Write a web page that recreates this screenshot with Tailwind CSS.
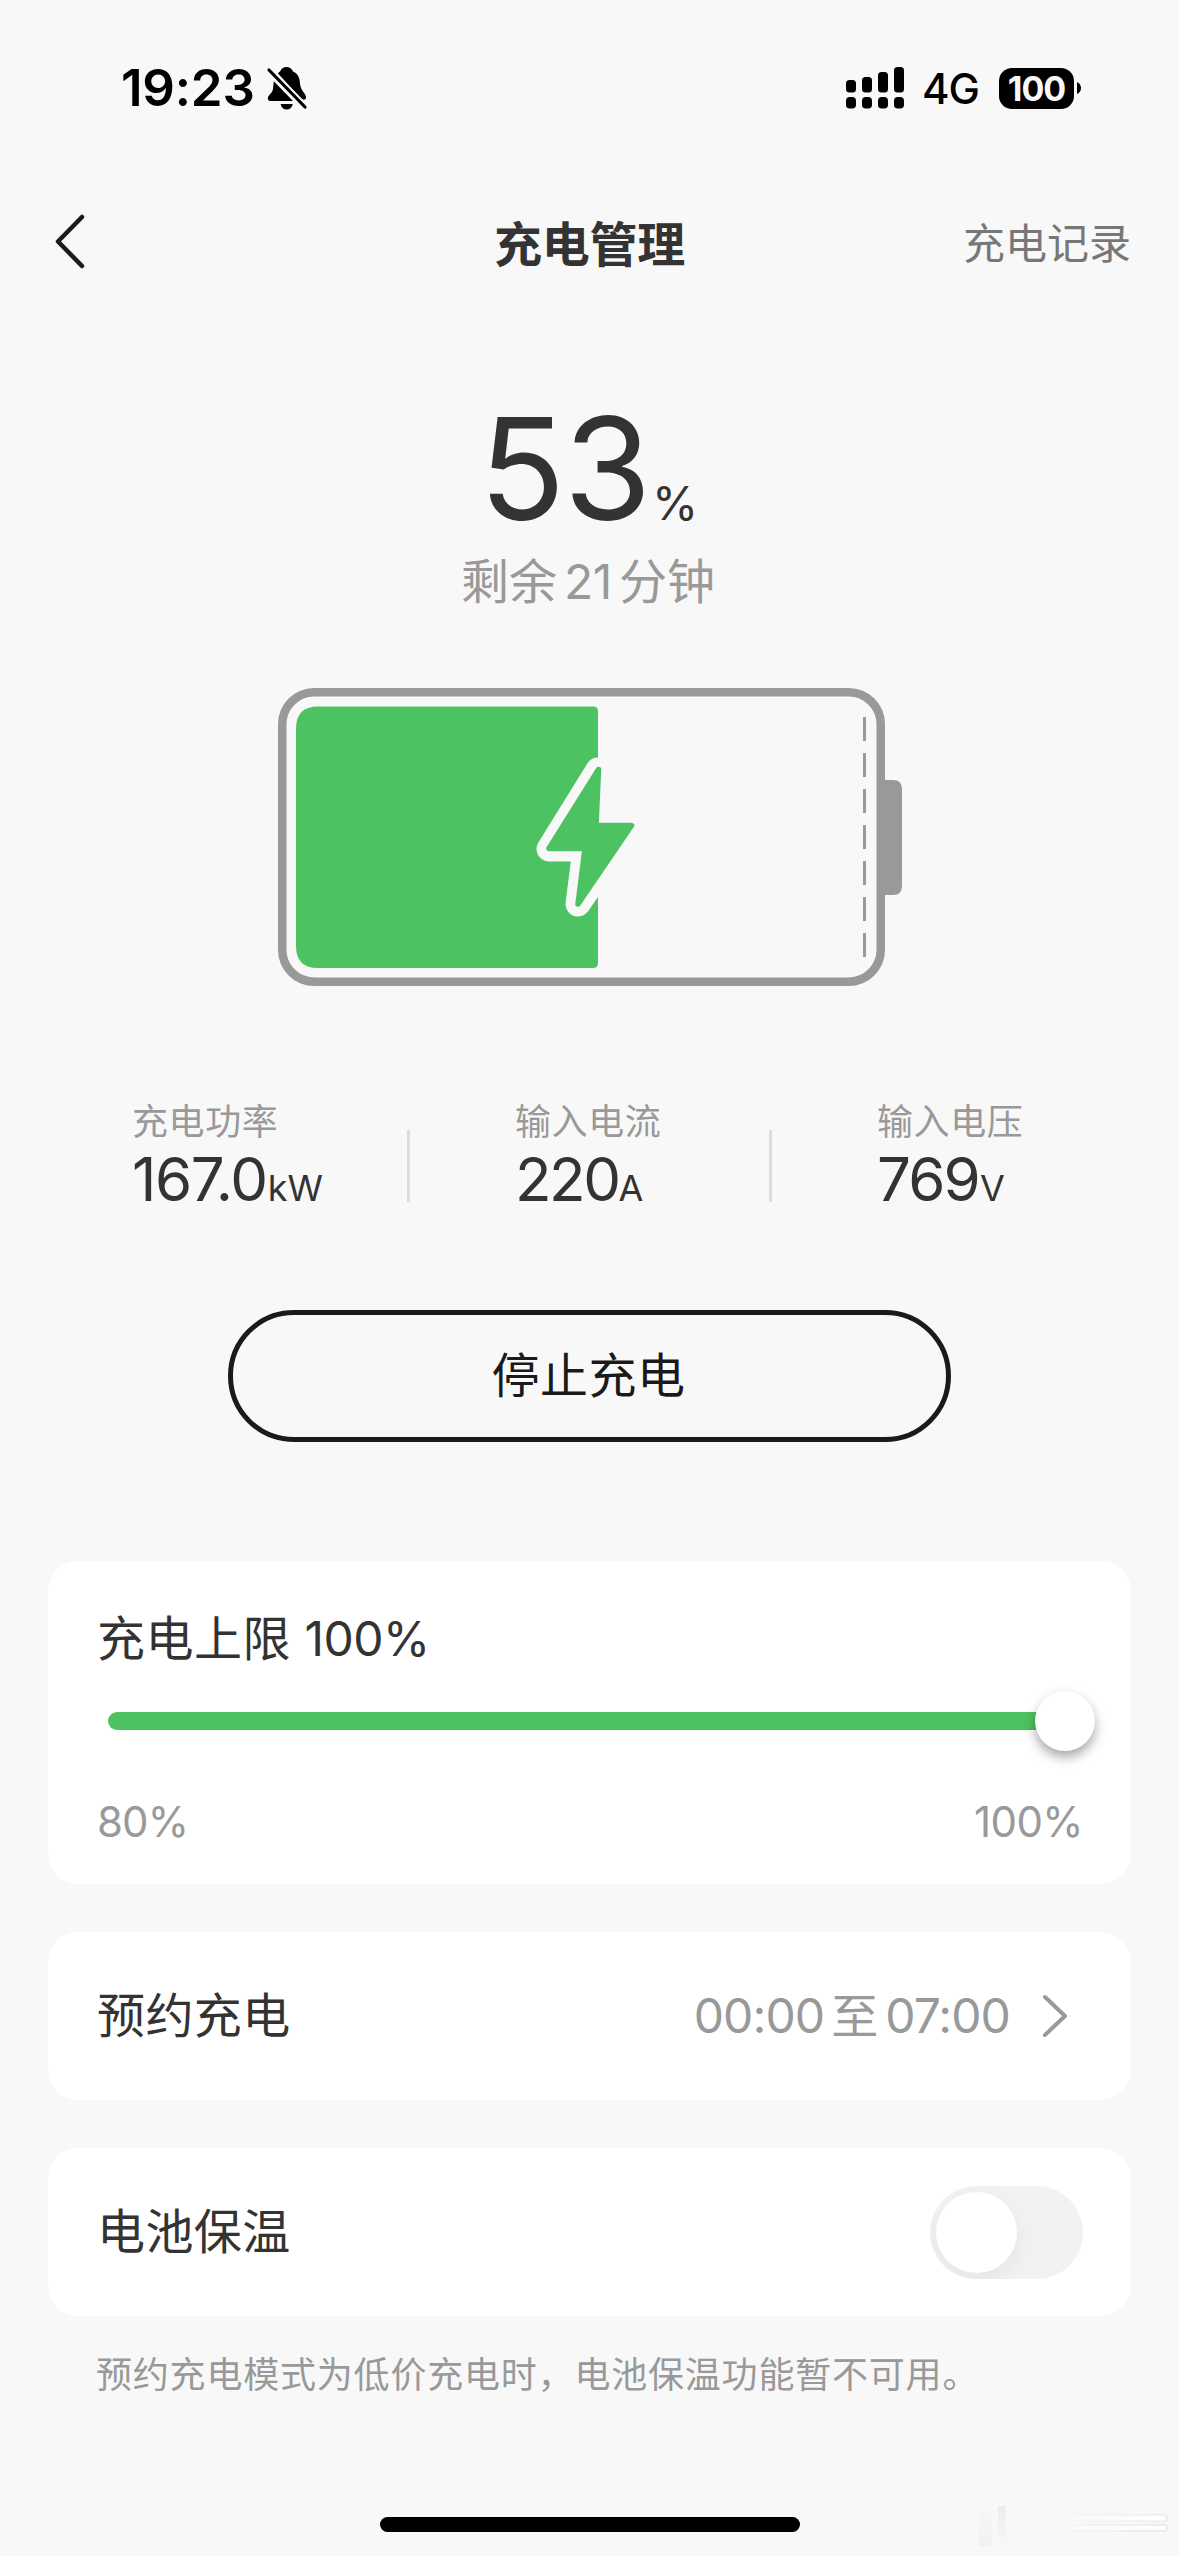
<!DOCTYPE html>
<html lang="zh-CN">
<head>
<meta charset="utf-8">
<title>充电管理</title>
<script src="https://cdn.jsdelivr.net/npm/@tailwindcss/browser@4"></script>
</head>
<body class="bg-[#f8f8f8]">
<div class="relative flex h-[2556px] w-[1179px] flex-col overflow-hidden bg-[#f8f8f8] font-['Inter','Noto_Sans_CJK_SC',sans-serif] text-[#333] whitespace-nowrap">

  <!-- Status bar -->
  <div class="flex h-[176px] shrink-0 items-center justify-between pl-[121px] pr-[98px] text-black">
    <div class="flex items-center">
      <span class="w-[145px] text-[51px] leading-[60px] font-semibold tracking-[-0.2px]">19:23</span>
      <svg class="h-[44px] w-[42px]" viewBox="0 0 42 44">
        <path d="M20.500 1C17.500 1 15 2.700 14.300 5.200L11.800 7.300L34.700 32.200C37.500 34.500 40 34 40 31C39.500 26.500 35 25.500 34 18C34 11.500 31.500 7.500 26.800 5.200C26 2.700 23.500 1 20.500 1Z"/>
        <path d="M7.800 15.200L27 35H4.500C2.800 35 1.800 34 1.800 32.300C2.200 28.500 6 28 7 23Z"/>
        <path d="M14.600 38H26.800C26.200 41.500 24 43.500 20.700 43.500C17.400 43.500 15.200 41.500 14.600 38Z"/>
        <path d="M2.500 3.500L39.500 41" fill="none" stroke="#f8f8f8" stroke-width="6.500"/>
        <path d="M3 4L39 41" fill="none" stroke="#000" stroke-width="3.200" stroke-linecap="round"/>
      </svg>
    </div>
    <div class="flex items-center">
      <svg class="h-[42px] w-[58px]" viewBox="0 0 58 42">
        <rect x="0" y="13" width="10" height="12.500" rx="3.500"/><rect x="16" y="10" width="10" height="15.500" rx="3.500"/><rect x="32" y="5" width="10" height="20.500" rx="3.500"/><rect x="48" y="0" width="10" height="25.500" rx="3.500"/>
        <rect x="0" y="30" width="10" height="11.500" rx="3.800"/><rect x="16" y="30" width="10" height="11.500" rx="3.800"/><rect x="32" y="30" width="10" height="11.500" rx="3.800"/><rect x="48" y="30" width="10" height="11.500" rx="3.800"/>
      </svg>
      <span class="ml-[18px] mt-[2px] w-[77px] text-[42px] leading-[50px] font-medium tracking-[-1px]">4G</span>
      <span class="flex h-[41px] w-[75px] items-center justify-center rounded-[13px] bg-black text-[34px] leading-[41px] font-bold tracking-[-1px] text-[#f8f8f8]">100</span>
      <svg class="ml-[3px] h-[12px] w-[4px]" viewBox="0 0 4 12"><path d="M0 0Q4 2 4 6T0 12Z"/></svg>
    </div>
  </div>

  <!-- Title bar -->
  <div class="grid h-[136px] shrink-0 grid-cols-3 items-center pl-[48px] pr-[48px]">
    <svg class="ml-[6px] -mt-[7px] h-[56px] w-[32px]" viewBox="0 0 32 56" fill="none" stroke="#1a1a1a" stroke-width="4.500" stroke-linecap="round" stroke-linejoin="round"><path d="M28 4L4 28.500L28 53"/></svg>
    <h1 class="mt-[1px] text-center text-[48px] leading-[60px] font-bold tracking-[-0.300px]">充电管理</h1>
    <span class="text-right text-[42px] leading-[60px] text-[#777]">充电记录</span>
  </div>

  <!-- Charge level -->
  <div class="mt-[85px] flex items-baseline justify-center pr-[2px]">
    <span class="text-[142px] leading-[142px] tracking-[-1.500px]">53</span>
    <span class="ml-[2px] text-[47px] leading-[60px]">%</span>
  </div>
  <div class="mt-[13px] pr-[3px] text-center text-[48px] leading-[60px] text-[#999]">剩余<span class="mx-[7px] tracking-[-0.300px]">21</span>分钟</div>

  <svg class="ml-[278px] mt-[76px] h-[298px] w-[624px] shrink-0" viewBox="0 0 624 298">
    <rect x="4.250" y="4.250" width="598.500" height="289.500" rx="32" fill="#f8f8f8" stroke="#999" stroke-width="8.500"/>
    <path d="M605 92H615Q624 92 624 101V198Q624 207 615 207H605Z" fill="#999"/>
    <path d="M586.500 29V270" stroke="#999" stroke-width="3" stroke-dasharray="24 12"/>
    <path d="M40 18.500H315Q320 18.500 320 23.500V275Q320 280 315 280H40Q18 280 18 258V40.500Q18 18.500 40 18.500Z" fill="#4dc262"/>
    <path d="M320 82L271 161H307L300 216L354 138H318L322 82Z" fill="#f8f8f8" stroke="#f8f8f8" stroke-width="25" stroke-linejoin="round"/>
    <path d="M320.500 81.500L271 160.500H307L300 216L353.500 137.500H318Z" fill="#4dc262" stroke="#4dc262" stroke-width="5.500" stroke-linejoin="round"/>
  </svg>

  <!-- Live readings -->
  <div class="mt-[114px] flex h-[109px] shrink-0 pl-[132px]">
    <div class="w-[275px]">
      <div class="text-[36px] leading-[44px] tracking-[0.6px] text-[#999]">充电功率</div>
      <div class="mt-[5px] flex items-baseline"><span class="text-[60px] leading-[60px] tracking-[-1.400px]">167.0</span><span class="ml-[1px] text-[36px]">kW</span></div>
    </div>
    <div class="mt-[30px] h-[72px] w-[3px] bg-[#ddd]"></div>
    <div class="ml-[105px] w-[254px]">
      <div class="text-[36px] leading-[44px] tracking-[0.6px] text-[#999]">输入电流</div>
      <div class="mt-[5px] flex items-baseline"><span class="text-[60px] leading-[60px] tracking-[-2.500px]">220</span><span class="text-[36px]">A</span></div>
    </div>
    <div class="mt-[30px] h-[72px] w-[3px] bg-[#ddd]"></div>
    <div class="ml-[105px]">
      <div class="text-[36px] leading-[44px] tracking-[0.6px] text-[#999]">输入电压</div>
      <div class="mt-[5px] flex items-baseline"><span class="text-[60px] leading-[60px] tracking-[-1.800px]">769</span><span class="ml-[1px] text-[36px]">V</span></div>
    </div>
  </div>

  <button class="ml-[228px] mt-[101px] h-[132px] w-[723px] shrink-0 rounded-full border-[5px] border-[#1a1a1a] pr-[2px] text-[48px] leading-[60px] tracking-[0.500px] text-[#1a1a1a]">停止充电</button>

  <!-- Charge limit -->
  <section class="mx-[48px] mt-[119px] h-[323px] shrink-0 rounded-[30px] bg-white px-[49px] pt-[48px]">
    <div class="text-[48px] leading-[60px]"><span class="tracking-[0.500px]">充电上限</span> <span class="tracking-[-0.500px]">100%</span></div>
    <div class="mt-[22px] flex h-[60px] items-center pl-[11px]">
      <div class="h-[18px] w-[940px] shrink-0 rounded-l-full bg-[#4dc262]"></div>
      <div class="-ml-[13px] size-[60px] shrink-0 rounded-full bg-white shadow-[0_6px_12px_rgba(0,0,0,0.35)]"></div>
    </div>
    <div class="mt-[46px] -mr-[1px] flex justify-between text-[42px] leading-[50px] tracking-[-0.900px] text-[#999]"><span>80%</span><span class="tracking-[-0.600px]">100%</span></div>
  </section>

  <!-- Scheduled charging -->
  <section class="mx-[48px] mt-[48px] flex h-[168px] shrink-0 items-center justify-between rounded-[30px] bg-white pl-[49px] pr-[62px]">
    <span class="text-[48px] leading-[60px] tracking-[0.400px]">预约充电</span>
    <span class="flex items-center text-[48px] leading-[60px] text-[#999]"><span class="tracking-[-0.900px]">00:00</span><span class="mx-[7px] text-[47px]">至</span><span class="tracking-[-0.900px]">07:00</span>
      <svg class="ml-[31px] h-[46px] w-[28px]" viewBox="0 0 28 46" fill="none" stroke="#999" stroke-width="4" stroke-linecap="round" stroke-linejoin="round"><path d="M4 4L24 23L4 42"/></svg>
    </span>
  </section>

  <!-- Battery warming -->
  <section class="mx-[48px] mt-[48px] flex h-[168px] shrink-0 items-center justify-between rounded-[30px] bg-white pl-[49px] pr-[48px]">
    <span class="text-[48px] leading-[60px] tracking-[0.400px]">电池保温</span>
    <span class="flex h-[93px] w-[153px] items-center overflow-hidden rounded-full bg-[#f2f2f2] pl-[6px]"><span class="size-[81px] rounded-full bg-white shadow-[0_8px_24px_rgba(0,0,0,0.06)]"></span></span>
  </section>
  <p class="ml-[96px] mt-[34px] text-[36px] leading-[50px] tracking-[0.8px] text-[#999]">预约充电模式为低价充电时，电池保温功能暂不可用。</p>

  <!-- Home indicator -->
  <div class="absolute bottom-[24px] left-[380px] h-[15px] w-[420px] rounded-full bg-black"></div>

  <svg class="absolute bottom-0 right-0 h-[76px] w-[279px]" viewBox="0 0 279 76">
    <defs>
      <linearGradient id="fadeDown" x2="0" y2="1"><stop stop-color="#ececec"/><stop offset="1" stop-color="#f7f7f7"/></linearGradient>
      <linearGradient id="fadeUp" x2="0" y2="1"><stop stop-color="#f7f7f7"/><stop offset="1" stop-color="#f1f1f1"/></linearGradient>
      <linearGradient id="edge"><stop stop-color="#f8f8f8"/><stop offset="1" stop-color="#ebebeb"/></linearGradient>
      <linearGradient id="core"><stop stop-color="#f8f8f8"/><stop offset="1" stop-color="#fff"/></linearGradient>
    </defs>
    <rect x="79" y="28" width="13" height="38" fill="url(#fadeUp)"/>
    <rect x="98" y="26" width="8" height="36" fill="url(#fadeDown)"/>
    <rect x="150" y="34" width="118" height="8" rx="4" fill="url(#edge)"/>
    <rect x="150" y="35.500" width="116" height="5" rx="2.500" fill="url(#core)"/>
    <rect x="150" y="44" width="118" height="8" rx="4" fill="url(#edge)"/>
    <rect x="150" y="46" width="116" height="4" rx="2" fill="url(#core)"/>
  </svg>
</div>
</body>
</html>
